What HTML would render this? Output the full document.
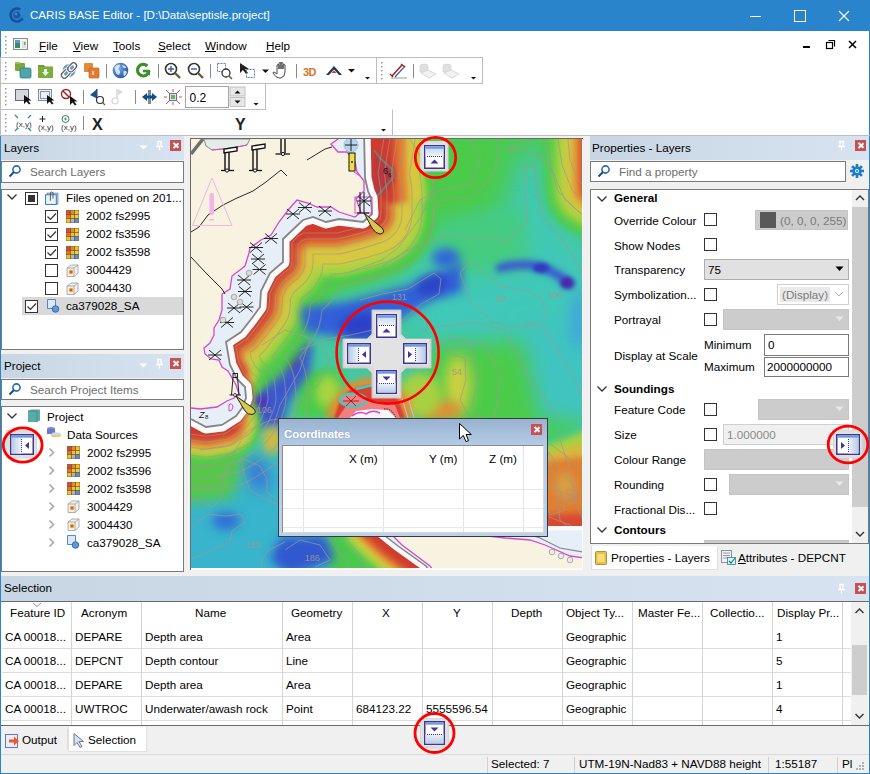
<!DOCTYPE html>
<html><head><meta charset="utf-8">
<style>
*{margin:0;padding:0;box-sizing:border-box}
html,body{width:870px;height:774px;overflow:hidden;background:#f0f0f0;font-family:"Liberation Sans",sans-serif;font-size:11.7px;color:#000}
.a{position:absolute}
.t{position:absolute;white-space:nowrap;line-height:14px}
.b{font-weight:bold}
.g{color:#6d6d6d}
.hdr{position:absolute;height:24px;background:linear-gradient(90deg,#c8d6e4,#d7e3f0)}
.box{position:absolute;background:#fff;border:1px solid #7a7a7a}
.cb{position:absolute;width:13px;height:13px;border:1px solid #333;background:#fff}
.xbtn{position:absolute;width:11px;height:11px;background:#c75050}
.xbtn:before,.xbtn:after{content:"";position:absolute;left:5px;top:2px;width:1.6px;height:7px;background:#fff;transform:rotate(45deg)}
.xbtn:after{transform:rotate(-45deg)}
.combo{position:absolute;background:#e1e1e1;border:1px solid #adadad}
.dis{position:absolute;background:#cccccc;border:1px solid #c4c4c4}
.vl{position:absolute;width:1px;background:#d5d5d5}
.hl{position:absolute;height:1px;background:#dcdcdc}
</style></head><body>

<svg width="0" height="0" style="position:absolute">
<defs>
<symbol id="grid" viewBox="0 0 13 13">
<rect x="0" y="0" width="13" height="13" fill="#8a6a3a"/>
<rect x="0.5" y="0.5" width="4" height="4" fill="#d2483a"/><rect x="4.5" y="0.5" width="4" height="4" fill="#e8882a"/><rect x="8.5" y="0.5" width="4" height="4" fill="#f4c21c"/>
<rect x="0.5" y="4.5" width="4" height="4" fill="#e8702a"/><rect x="4.5" y="4.5" width="4" height="4" fill="#f2c41e"/><rect x="8.5" y="4.5" width="4" height="4" fill="#e8d24a"/>
<rect x="0.5" y="8.5" width="4" height="4" fill="#f4c41e"/><rect x="4.5" y="8.5" width="4" height="4" fill="#a8b8c8"/><rect x="8.5" y="8.5" width="4" height="4" fill="#5a8ed0"/>
<path d="M4.5 0v13M8.5 0v13M0 4.5h13M0 8.5h13" stroke="#6a4a2a" stroke-width="0.6"/>
</symbol>
<symbol id="cube" viewBox="0 0 13 13">
<path d="M1 4l4-3h7v8l-4 3.5H1z" fill="#f2f2f2" stroke="#9a9a9a" stroke-width="0.8"/>
<path d="M1 4h7v8.5M8 4l4-3" fill="none" stroke="#9a9a9a" stroke-width="0.8"/>
<circle cx="5" cy="8" r="2.2" fill="#f0a020"/><circle cx="5" cy="8" r="1" fill="#e04020"/>
</symbol>
<symbol id="clip" viewBox="0 0 13 13">
<rect x="2" y="2" width="10" height="10" fill="#cfe0ef" stroke="#5a8ac0" stroke-width="0.8"/>
<rect x="0.5" y="3.5" width="10" height="9" fill="#e8f0f8" stroke="#3a78b8" stroke-width="0.9"/>
<path d="M5 9V1.5q1.2-1.2 2.4 0V7" fill="none" stroke="#555" stroke-width="0.9"/>
</symbol>
<symbol id="doc" viewBox="0 0 14 14">
<path d="M1.5 0.5h8v9h-8z" fill="#dce8f6" stroke="#4a7ac0" stroke-width="0.9"/>
<circle cx="9.5" cy="10" r="3.3" fill="#5a9ae0" stroke="#2a5aa0" stroke-width="0.8"/>
</symbol>
<symbol id="chk" viewBox="0 0 13 13">
<path d="M2.5 6.5l3 3 5.5-6" fill="none" stroke="#333" stroke-width="1.2"/>
</symbol>
</defs></svg>

<!-- window border -->
<div class="a" style="left:0;top:0;width:870px;height:774px;border:1px solid #2a84cc;border-top:0"></div>
<!-- title bar -->
<div class="a" style="left:0;top:0;width:870px;height:31px;background:#2a84cc"></div>
<svg class="a" style="left:8px;top:6px" width="18" height="18"><circle cx="9" cy="9" r="6.5" fill="none" stroke="#1c4f9a" stroke-width="2.6" stroke-dasharray="30 10" transform="rotate(30 9 9)"/><circle cx="8.8" cy="9" r="3.6" fill="#1858a8"/><circle cx="8" cy="8" r="1.3" fill="#4a8ad8"/></svg>
<div class="t" style="left:30px;top:8px;color:#fff;font-size:11.6px">CARIS BASE Editor - [D:\Data\septisle.project]</div>
<svg class="a" style="left:750px;top:6px" width="115" height="20">
<path d="M0 10.5h11" stroke="#fff" stroke-width="1"/>
<rect x="44.5" y="4.5" width="11" height="11" fill="none" stroke="#fff" stroke-width="1"/>
<path d="M89 5l10 10M99 5l-10 10" stroke="#fff" stroke-width="1.1"/>
</svg>

<!-- menu bar & toolbar bg -->
<div class="a" style="left:1px;top:31px;width:868px;height:104px;background:#fff"></div>
<svg class="a" style="left:12px;top:37px" width="18" height="15"><rect x="1.5" y="1.5" width="14" height="11" fill="#f4f4f4" stroke="#8a8a8a"/><rect x="3" y="4" width="5" height="7" fill="#3a8a6a"/><rect x="3" y="3" width="5" height="3" fill="#5a9ad0"/><rect x="10" y="4" width="4" height="7" fill="#e0e0e0"/><rect x="12" y="5" width="1.5" height="3" fill="#6ab04a"/></svg>
<div class="t" style="left:39px;top:39px"><u>F</u>ile</div>
<div class="t" style="left:73px;top:39px"><u>V</u>iew</div>
<div class="t" style="left:113px;top:39px"><u>T</u>ools</div>
<div class="t" style="left:158px;top:39px"><u>S</u>elect</div>
<div class="t" style="left:205px;top:39px"><u>W</u>indow</div>
<div class="t" style="left:266px;top:39px"><u>H</u>elp</div>
<svg class="a" style="left:800px;top:36px" width="65" height="18">
<rect x="3" y="10" width="7" height="2" fill="#000"/>
<rect x="26.5" y="6.5" width="6" height="6" fill="none" stroke="#000" stroke-width="1.2"/><path d="M28.5 4.5h6v6" fill="none" stroke="#000" stroke-width="1.2"/>
<path d="M49 5l7 7M56 5l-7 7" stroke="#000" stroke-width="1.5"/>
</svg>

<!-- docks background -->
<div class="a" style="left:1px;top:135px;width:868px;height:638px;background:#f0f0f0"></div>

<!-- ============ Layers panel ============ -->
<div class="hdr" style="left:1px;top:136px;width:183px"></div>
<div class="t" style="left:4px;top:141px">Layers</div>
<svg class="a" style="left:138px;top:140px" width="30" height="14"><path d="M1.5 5.5h8l-4 4z" fill="#fff"/><path d="M19 1.5h5M20 1.5v5h3v-5M18 6.5h7M21.5 6.5v4" stroke="#fff" stroke-width="1.3" fill="none"/></svg>
<div class="xbtn" style="left:170px;top:140px"></div>
<div class="box" style="left:1px;top:161px;width:183px;height:22px"></div>
<svg class="a" style="left:8px;top:164px" width="14" height="14"><circle cx="8.5" cy="5.5" r="3.6" fill="none" stroke="#2a6ab0" stroke-width="1.6"/><path d="M6 8l-4.5 4.5" stroke="#1a4a8a" stroke-width="2"/></svg>
<div class="t g" style="left:30px;top:165px">Search Layers</div>
<div class="box" style="left:1px;top:189px;width:183px;height:161px"></div>
<div class="a" style="left:22px;top:297px;width:161px;height:18px;background:#d9d9d9"></div>
<svg class="a" style="left:6px;top:193px" width="12" height="8"><path d="M1.5 1.5l4.5 4.5 4.5-4.5" fill="none" stroke="#333" stroke-width="1.3"/></svg>
<div class="cb" style="left:25px;top:192px"></div><div class="a" style="left:28px;top:195px;width:7px;height:7px;background:#333"></div>
<svg class="a" style="left:45px;top:191px" width="14" height="14"><use href="#clip"/></svg>
<div class="t" style="left:66px;top:191px">Files opened on 201...</div>

<div class="cb" style="left:45px;top:210px"></div><svg class="a" style="left:45px;top:210px" width="13" height="13"><use href="#chk"/></svg>
<svg class="a" style="left:66px;top:210px" width="13" height="13"><use href="#grid"/></svg>
<div class="t" style="left:86px;top:209px">2002 fs2995</div>
<div class="cb" style="left:45px;top:228px"></div><svg class="a" style="left:45px;top:228px" width="13" height="13"><use href="#chk"/></svg>
<svg class="a" style="left:66px;top:228px" width="13" height="13"><use href="#grid"/></svg>
<div class="t" style="left:86px;top:227px">2002 fs3596</div>
<div class="cb" style="left:45px;top:246px"></div><svg class="a" style="left:45px;top:246px" width="13" height="13"><use href="#chk"/></svg>
<svg class="a" style="left:66px;top:246px" width="13" height="13"><use href="#grid"/></svg>
<div class="t" style="left:86px;top:245px">2002 fs3598</div>
<div class="cb" style="left:45px;top:264px"></div>
<svg class="a" style="left:66px;top:264px" width="13" height="13"><use href="#cube"/></svg>
<div class="t" style="left:86px;top:263px">3004429</div>
<div class="cb" style="left:45px;top:282px"></div>
<svg class="a" style="left:66px;top:282px" width="13" height="13"><use href="#cube"/></svg>
<div class="t" style="left:86px;top:281px">3004430</div>
<div class="cb" style="left:25px;top:300px"></div><svg class="a" style="left:25px;top:300px" width="13" height="13"><use href="#chk"/></svg>
<svg class="a" style="left:46px;top:299px" width="14" height="14"><use href="#doc"/></svg>
<div class="t" style="left:66px;top:299px">ca379028_SA</div>

<!-- ============ Project panel ============ -->
<div class="hdr" style="left:1px;top:354px;width:183px"></div>
<div class="t" style="left:4px;top:359px">Project</div>
<svg class="a" style="left:138px;top:358px" width="30" height="14"><path d="M1.5 5.5h8l-4 4z" fill="#fff"/><path d="M19 1.5h5M20 1.5v5h3v-5M18 6.5h7M21.5 6.5v4" stroke="#fff" stroke-width="1.3" fill="none"/></svg>
<div class="xbtn" style="left:170px;top:358px"></div>
<div class="box" style="left:1px;top:379px;width:183px;height:21px"></div>
<svg class="a" style="left:8px;top:382px" width="14" height="14"><circle cx="8.5" cy="5.5" r="3.6" fill="none" stroke="#2a6ab0" stroke-width="1.6"/><path d="M6 8l-4.5 4.5" stroke="#1a4a8a" stroke-width="2"/></svg>
<div class="t g" style="left:30px;top:383px">Search Project Items</div>
<div class="box" style="left:1px;top:406px;width:183px;height:166px"></div>
<svg class="a" style="left:6px;top:412px" width="12" height="8"><path d="M1.5 1.5l4.5 4.5 4.5-4.5" fill="none" stroke="#333" stroke-width="1.3"/></svg>
<svg class="a" style="left:26px;top:409px" width="16" height="15"><path d="M2 2l3-1.5h9v11l-3 1.5H2z" fill="#5aaaa8"/><path d="M2 2h9v11" fill="none" stroke="#3a8a88" stroke-width="0.8"/></svg>
<div class="t" style="left:47px;top:410px">Project</div>
<svg class="a" style="left:46px;top:426px" width="16" height="14"><ellipse cx="5" cy="3" rx="4" ry="2" fill="#7a8ad0"/><rect x="1" y="3" width="8" height="5" fill="#6a7ac8"/><ellipse cx="10" cy="9" rx="5" ry="2.2" fill="#f0c830"/><ellipse cx="10" cy="8" rx="4.5" ry="1.8" fill="#c8d8f0"/></svg>
<div class="t" style="left:67px;top:428px">Data Sources</div>
<svg class="a" style="left:47px;top:447px" width="10" height="108"><path d="M2.5 1.5l4 4-4 4M2.5 19.5l4 4-4 4M2.5 37.5l4 4-4 4M2.5 55.5l4 4-4 4M2.5 73.5l4 4-4 4M2.5 91.5l4 4-4 4" fill="none" stroke="#a8a8a8" stroke-width="1.6"/></svg>
<svg class="a" style="left:67px;top:446px" width="13" height="13"><use href="#grid"/></svg>
<div class="t" style="left:87px;top:446px">2002 fs2995</div>
<svg class="a" style="left:67px;top:464px" width="13" height="13"><use href="#grid"/></svg>
<div class="t" style="left:87px;top:464px">2002 fs3596</div>
<svg class="a" style="left:67px;top:482px" width="13" height="13"><use href="#grid"/></svg>
<div class="t" style="left:87px;top:482px">2002 fs3598</div>
<svg class="a" style="left:67px;top:500px" width="13" height="13"><use href="#cube"/></svg>
<div class="t" style="left:87px;top:500px">3004429</div>
<svg class="a" style="left:67px;top:518px" width="13" height="13"><use href="#cube"/></svg>
<div class="t" style="left:87px;top:518px">3004430</div>
<svg class="a" style="left:66px;top:535px" width="14" height="14"><use href="#doc"/></svg>
<div class="t" style="left:87px;top:536px">ca379028_SA</div>

<!-- map frame -->
<div class="a" style="left:190px;top:138px;width:393px;height:432px;background:#fbfbfb;border-left:1px solid #6a6a6a;border-top:1px solid #6a6a6a"></div>

<!-- ============ Properties panel ============ -->
<div class="hdr" style="left:590px;top:136px;width:279px"></div>
<div class="t" style="left:592px;top:141px">Properties - Layers</div>
<svg class="a" style="left:836px;top:140px" width="14" height="14"><path d="M3 1.5h5M4 1.5v5h3v-5M2 6.5h7M5.5 6.5v4" stroke="#fff" stroke-width="1.3" fill="none"/></svg>
<div class="xbtn" style="left:855px;top:140px"></div>
<div class="box" style="left:590px;top:161px;width:256px;height:21px"></div>
<svg class="a" style="left:597px;top:164px" width="14" height="14"><circle cx="8.5" cy="5.5" r="3.6" fill="none" stroke="#2a6ab0" stroke-width="1.6"/><path d="M6 8l-4.5 4.5" stroke="#1a4a8a" stroke-width="2"/></svg>
<div class="t g" style="left:619px;top:165px">Find a property</div>
<svg class="a" style="left:849px;top:163px" width="16" height="16"><g transform="translate(8 8)" fill="#1a7ad0"><circle r="4.6"/><rect x="-1.3" y="-7" width="2.6" height="14"/><rect x="-7" y="-1.3" width="14" height="2.6"/><rect x="-1.3" y="-7" width="2.6" height="14" transform="rotate(45)"/><rect x="-1.3" y="-7" width="2.6" height="14" transform="rotate(-45)"/><circle r="2" fill="#fff"/><circle r="1.1" fill="#1a7ad0"/></g></svg>
<div class="box" style="left:590px;top:189px;width:279px;height:355px"></div>
<!-- prop scrollbar -->
<div class="a" style="left:852px;top:190px;width:16px;height:353px;background:#f0f0f0"></div>
<div class="a" style="left:852px;top:207px;width:16px;height:300px;background:#cdcdcd"></div>
<svg class="a" style="left:852px;top:190px" width="16" height="353"><path d="M4 10l4-4 4 4" fill="none" stroke="#333" stroke-width="1.4"/><path d="M4 342l4 4 4-4" fill="none" stroke="#333" stroke-width="1.4"/></svg>

<svg class="a" style="left:596px;top:195px" width="12" height="8"><path d="M1.5 1.5l4.5 4.5 4.5-4.5" fill="none" stroke="#333" stroke-width="1.3"/></svg>
<div class="t b" style="left:614px;top:191px">General</div>
<div class="t" style="left:614px;top:213.5px">Override Colour</div>
<div class="cb" style="left:704px;top:213px"></div>
<div class="dis" style="left:755px;top:210px;width:93px;height:20px"></div>
<div class="a" style="left:760px;top:212px;width:16px;height:16px;background:#595959"></div>
<div class="t" style="left:780px;top:213.5px;color:#7a7a7a">(0, 0, 0, 255)</div>
<div class="t" style="left:614px;top:239px">Show Nodes</div>
<div class="cb" style="left:704px;top:238px"></div>
<div class="t" style="left:614px;top:262.5px">Transparency</div>
<div class="combo" style="left:704px;top:259px;width:145px;height:21px"></div>
<div class="t" style="left:708px;top:262.5px">75</div>
<svg class="a" style="left:835px;top:266px" width="10" height="6"><path d="M0.5 0.5h8l-4 4.5z" fill="#000"/></svg>
<div class="t" style="left:614px;top:287.5px">Symbolization...</div>
<div class="cb" style="left:704px;top:288px"></div>
<div class="a" style="left:777px;top:284px;width:72px;height:21px;background:#fff;border:1px solid #d0d0d0"></div>
<div class="a" style="left:780px;top:287px;width:50px;height:15px;background:#e8e8e8"></div>
<div class="t" style="left:782px;top:287.5px;color:#7a7a7a">(Display)</div>
<svg class="a" style="left:834px;top:291px" width="10" height="7"><path d="M1 1l4 4 4-4" fill="none" stroke="#b0b0b0" stroke-width="1"/></svg>
<div class="t" style="left:614px;top:312.5px">Portrayal</div>
<div class="cb" style="left:704px;top:313px"></div>
<div class="dis" style="left:723px;top:309px;width:126px;height:21px"></div>
<svg class="a" style="left:835px;top:316px" width="10" height="7"><path d="M0.5 0.5h8l-4 4.5z" fill="#e8e8e8"/></svg>
<div class="t" style="left:614px;top:349px">Display at Scale</div>
<div class="t" style="left:704px;top:338px">Minimum</div>
<div class="a" style="left:764px;top:334px;width:85px;height:22px;background:#fff;border:1px solid #7a7a7a"></div>
<div class="t" style="left:768px;top:338px">0</div>
<div class="t" style="left:704px;top:360px">Maximum</div>
<div class="a" style="left:764px;top:357px;width:85px;height:20px;background:#fff;border:1px solid #7a7a7a"></div>
<div class="t" style="left:767px;top:360px">2000000000</div>
<svg class="a" style="left:596px;top:385px" width="12" height="8"><path d="M1.5 1.5l4.5 4.5 4.5-4.5" fill="none" stroke="#333" stroke-width="1.3"/></svg>
<div class="t b" style="left:614px;top:382px">Soundings</div>
<div class="t" style="left:614px;top:403px">Feature Code</div>
<div class="cb" style="left:704px;top:403px"></div>
<div class="dis" style="left:758px;top:399px;width:91px;height:21px"></div>
<svg class="a" style="left:835px;top:406px" width="10" height="7"><path d="M0.5 0.5h8l-4 4.5z" fill="#e8e8e8"/></svg>
<div class="t" style="left:614px;top:428px">Size</div>
<div class="cb" style="left:704px;top:428px"></div>
<div class="a" style="left:723px;top:424px;width:126px;height:21px;background:#f0f0f0;border:1px solid #cfcfcf"></div>
<div class="t" style="left:727px;top:428px;color:#8a8a8a">1.000000</div>
<div class="t" style="left:614px;top:453px">Colour Range</div>
<div class="dis" style="left:704px;top:449px;width:145px;height:21px"></div>
<div class="t" style="left:614px;top:478px">Rounding</div>
<div class="cb" style="left:704px;top:478px"></div>
<div class="dis" style="left:729px;top:474px;width:120px;height:21px"></div>
<svg class="a" style="left:835px;top:481px" width="10" height="7"><path d="M0.5 0.5h8l-4 4.5z" fill="#e8e8e8"/></svg>
<div class="t" style="left:614px;top:503px">Fractional Dis...</div>
<div class="cb" style="left:704px;top:502px"></div>
<svg class="a" style="left:596px;top:526px" width="12" height="8"><path d="M1.5 1.5l4.5 4.5 4.5-4.5" fill="none" stroke="#333" stroke-width="1.3"/></svg>
<div class="t b" style="left:614px;top:523px">Contours</div>
<div class="a" style="left:704px;top:540px;width:145px;height:3px;background:#cccccc;border-top:1px solid #c0c0c0"></div>
<!-- prop tabs -->
<div class="a" style="left:591px;top:546px;width:127px;height:24px;background:#fff;border:1px solid #e0e0e0;border-top:0"></div>
<svg class="a" style="left:594px;top:550px" width="14" height="16"><rect x="1.5" y="1.5" width="11" height="13" rx="1" fill="#f0c030" stroke="#8a7a50" stroke-width="0.8"/><rect x="3.5" y="4" width="7" height="8" fill="#f8e080"/></svg>
<div class="t" style="left:611px;top:551px">Properties - Layers</div>
<svg class="a" style="left:720px;top:549px" width="18" height="17"><rect x="1.5" y="1.5" width="10" height="12" fill="#f0f0f0" stroke="#7a7a7a" stroke-width="0.8"/><path d="M3 4h7M3 6.5h7M3 9h5" stroke="#7a8aa0" stroke-width="0.8"/><rect x="7.5" y="8.5" width="8" height="7" fill="#e0f0f8" stroke="#3a78b8" stroke-width="0.8"/><path d="M9 12l2 2 4-5" fill="none" stroke="#1a8a4a" stroke-width="1.2"/></svg>
<div class="t" style="left:738px;top:551px"><u>A</u>ttributes - DEPCNT</div>

<!-- ============ Selection panel ============ -->
<div class="hdr" style="left:1px;top:576px;width:868px;height:25px"></div>
<div class="t" style="left:4px;top:581px">Selection</div>
<svg class="a" style="left:836px;top:583px" width="14" height="14"><path d="M3 1.5h5M4 1.5v5h3v-5M2 6.5h7M5.5 6.5v4" stroke="#fff" stroke-width="1.3" fill="none"/></svg>
<div class="xbtn" style="left:855px;top:583px"></div>
<div class="a" style="left:1px;top:601px;width:868px;height:125px;background:#fff;border-top:1px solid #6a6a6a;border-bottom:1px solid #6a6a6a"></div>
<!-- grid lines -->
<div class="hl" style="left:2px;top:648px;width:849px"></div>
<div class="hl" style="left:2px;top:672px;width:849px"></div>
<div class="hl" style="left:2px;top:696px;width:849px"></div>
<div class="hl" style="left:2px;top:720px;width:849px"></div>
<div class="vl" style="left:71px;top:602px;height:123px"></div>
<div class="vl" style="left:141px;top:602px;height:123px"></div>
<div class="vl" style="left:282px;top:602px;height:123px"></div>
<div class="vl" style="left:352px;top:602px;height:123px"></div>
<div class="vl" style="left:422px;top:602px;height:123px"></div>
<div class="vl" style="left:492px;top:602px;height:123px"></div>
<div class="vl" style="left:562px;top:602px;height:123px"></div>
<div class="vl" style="left:632px;top:602px;height:123px"></div>
<div class="vl" style="left:702px;top:602px;height:123px"></div>
<div class="vl" style="left:772px;top:602px;height:123px"></div>
<div class="vl" style="left:842px;top:602px;height:123px"></div>
<svg class="a" style="left:32px;top:602px" width="10" height="6"><path d="M1 1l4 3.5 4-3.5" fill="none" stroke="#8a8a8a" stroke-width="0.9"/></svg>
<div class="t" style="left:10px;top:606px">Feature ID</div>
<div class="t" style="left:81px;top:606px">Acronym</div>
<div class="t" style="left:195px;top:606px">Name</div>
<div class="t" style="left:291px;top:606px">Geometry</div>
<div class="t" style="left:382px;top:606px">X</div>
<div class="t" style="left:453px;top:606px">Y</div>
<div class="t" style="left:511px;top:606px">Depth</div>
<div class="t" style="left:566px;top:606px">Object Ty...</div>
<div class="t" style="left:638px;top:606px">Master Fe...</div>
<div class="t" style="left:710px;top:606px">Collectio...</div>
<div class="t" style="left:777px;top:606px">Display Pr...</div>

<div class="t" style="left:5px;top:630px">CA 00018...</div><div class="t" style="left:75px;top:630px">DEPARE</div><div class="t" style="left:145px;top:630px">Depth area</div><div class="t" style="left:286px;top:630px">Area</div><div class="t" style="left:566px;top:630px">Geographic</div><div class="t" style="left:776px;top:630px">1</div>
<div class="t" style="left:5px;top:654px">CA 00018...</div><div class="t" style="left:75px;top:654px">DEPCNT</div><div class="t" style="left:145px;top:654px">Depth contour</div><div class="t" style="left:286px;top:654px">Line</div><div class="t" style="left:566px;top:654px">Geographic</div><div class="t" style="left:776px;top:654px">5</div>
<div class="t" style="left:5px;top:678px">CA 00018...</div><div class="t" style="left:75px;top:678px">DEPARE</div><div class="t" style="left:145px;top:678px">Depth area</div><div class="t" style="left:286px;top:678px">Area</div><div class="t" style="left:566px;top:678px">Geographic</div><div class="t" style="left:776px;top:678px">1</div>
<div class="t" style="left:5px;top:702px">CA 00018...</div><div class="t" style="left:75px;top:702px">UWTROC</div><div class="t" style="left:145px;top:702px">Underwater/awash rock</div><div class="t" style="left:286px;top:702px">Point</div><div class="t" style="left:356px;top:702px">684123.22</div><div class="t" style="left:426px;top:702px">5555596.54</div><div class="t" style="left:566px;top:702px">Geographic</div><div class="t" style="left:776px;top:702px">4</div>
<!-- table scrollbar -->
<div class="a" style="left:851px;top:602px;width:17px;height:123px;background:#f0f0f0"></div>
<div class="a" style="left:852px;top:645px;width:15px;height:50px;background:#cdcdcd"></div>
<svg class="a" style="left:851px;top:602px" width="17" height="123"><path d="M4.5 11l4-4 4 4" fill="none" stroke="#333" stroke-width="1.4"/><path d="M4.5 112l4 4 4-4" fill="none" stroke="#333" stroke-width="1.4"/></svg>

<!-- bottom tabs -->
<div class="a" style="left:1px;top:754px;width:868px;height:1px;background:#dadada"></div>
<div class="a" style="left:1px;top:729px;width:67px;height:20px;background:#f0f0f0;border-right:1px solid #dcdcdc"></div>
<div class="a" style="left:68px;top:727px;width:79px;height:25px;background:#fff;border:1px solid #e0e0e0;border-top:0"></div>
<svg class="a" style="left:4px;top:733px" width="17" height="16"><rect x="1.5" y="1.5" width="12" height="13" fill="#e8eef8" stroke="#5a6aa8" stroke-width="0.9"/><path d="M5 6.5h5v-3l5 4.5-5 4.5v-3H5z" fill="#f05a2a"/></svg>
<div class="t" style="left:22px;top:733px">Output</div>
<svg class="a" style="left:72px;top:732px" width="14" height="17"><path d="M2 1.5v12l3-3 3 5 2-1-3-5h4.5z" fill="#d8e4f2" stroke="#5a6a8a" stroke-width="0.9"/></svg>
<div class="t" style="left:88px;top:733px">Selection</div>

<!-- status bar -->
<div class="a" style="left:487px;top:757px;width:1px;height:16px;background:#d0d0d0"></div>
<div class="a" style="left:574px;top:757px;width:1px;height:16px;background:#d0d0d0"></div>
<div class="a" style="left:768px;top:757px;width:1px;height:16px;background:#d0d0d0"></div>
<div class="a" style="left:837px;top:757px;width:1px;height:16px;background:#d0d0d0"></div>
<div class="t" style="left:491px;top:757px">Selected: 7</div>
<div class="t" style="left:579px;top:757px">UTM-19N-Nad83 + NAVD88 height</div>
<div class="t" style="left:775px;top:757px">1:55187</div>
<div class="t" style="left:842px;top:757px">Pl</div>
<svg class="a" style="left:854px;top:760px" width="12" height="12"><g fill="#b0b0b0"><rect x="8" y="2" width="2" height="2"/><rect x="5" y="5" width="2" height="2"/><rect x="8" y="5" width="2" height="2"/><rect x="2" y="8" width="2" height="2"/><rect x="5" y="8" width="2" height="2"/><rect x="8" y="8" width="2" height="2"/></g></svg>

<svg class="a" style="left:0;top:0" width="870" height="136"><rect x="0.5" y="57.5" width="376" height="26" fill="none" stroke="#bdbdbd"/><rect x="376.5" y="57.5" width="106" height="26" fill="none" stroke="#bdbdbd"/><rect x="0.5" y="83.5" width="265" height="26" fill="none" stroke="#bdbdbd"/><path d="M0.5 109.5V135M392.5 135V109.5" fill="none" stroke="#bdbdbd"/><line x1="0" y1="135.5" x2="870" y2="135.5" stroke="#bdbdbd"/><rect x="5" y="62" width="1.5" height="1.5" fill="#9a9a9a"/><rect x="5" y="66" width="1.5" height="1.5" fill="#9a9a9a"/><rect x="5" y="70" width="1.5" height="1.5" fill="#9a9a9a"/><rect x="5" y="74" width="1.5" height="1.5" fill="#9a9a9a"/><rect x="5" y="78" width="1.5" height="1.5" fill="#9a9a9a"/><rect x="5" y="88" width="1.5" height="1.5" fill="#9a9a9a"/><rect x="5" y="92" width="1.5" height="1.5" fill="#9a9a9a"/><rect x="5" y="96" width="1.5" height="1.5" fill="#9a9a9a"/><rect x="5" y="100" width="1.5" height="1.5" fill="#9a9a9a"/><rect x="5" y="104" width="1.5" height="1.5" fill="#9a9a9a"/><rect x="5" y="114" width="1.5" height="1.5" fill="#9a9a9a"/><rect x="5" y="118" width="1.5" height="1.5" fill="#9a9a9a"/><rect x="5" y="122" width="1.5" height="1.5" fill="#9a9a9a"/><rect x="5" y="126" width="1.5" height="1.5" fill="#9a9a9a"/><rect x="5" y="130" width="1.5" height="1.5" fill="#9a9a9a"/><rect x="381" y="62" width="1.5" height="1.5" fill="#9a9a9a"/><rect x="381" y="66" width="1.5" height="1.5" fill="#9a9a9a"/><rect x="381" y="70" width="1.5" height="1.5" fill="#9a9a9a"/><rect x="381" y="74" width="1.5" height="1.5" fill="#9a9a9a"/><rect x="381" y="78" width="1.5" height="1.5" fill="#9a9a9a"/><rect x="5" y="36" width="1.5" height="1.5" fill="#9a9a9a"/><rect x="5" y="40" width="1.5" height="1.5" fill="#9a9a9a"/><rect x="5" y="44" width="1.5" height="1.5" fill="#9a9a9a"/><rect x="5" y="48" width="1.5" height="1.5" fill="#9a9a9a"/><rect x="5" y="52" width="1.5" height="1.5" fill="#9a9a9a"/><rect x="106.0" y="64" width="1" height="14" fill="#8a8a8a"/><rect x="158.0" y="64" width="1" height="14" fill="#8a8a8a"/><rect x="210.0" y="64" width="1" height="14" fill="#8a8a8a"/><rect x="296.0" y="64" width="1" height="14" fill="#8a8a8a"/><rect x="413.0" y="64" width="1" height="14" fill="#8a8a8a"/><rect x="83.0" y="90" width="1" height="14" fill="#8a8a8a"/><rect x="135.0" y="90" width="1" height="14" fill="#8a8a8a"/><rect x="83.0" y="116" width="1" height="14" fill="#8a8a8a"/><rect x="15" y="63" width="10" height="8" rx="1" fill="#7aa83a"/><rect x="15" y="62" width="5" height="2" fill="#9cc45a"/><rect x="20" y="68" width="11" height="10" rx="1.5" fill="#4fa5a8" stroke="#2e7f85" stroke-width="0.8"/><path d="M38 65h6l1 1.5h8v11.5h-15z" fill="#6f9e35"/><rect x="38" y="67" width="15" height="11" fill="#7cab3e"/><path d="M44 69h3v3h2l-3.5 4-3.5-4h2z" fill="#eaf3dc"/><circle cx="69" cy="70.5" r="6.5" fill="#5a88c0" opacity="0.85"/><g transform="rotate(-45 69 70.5)"><rect x="59.5" y="67.5" width="10" height="6" rx="3" fill="none" stroke="#fff" stroke-width="3"/><rect x="59.5" y="67.5" width="10" height="6" rx="3" fill="none" stroke="#5a5a5a" stroke-width="1.2"/><rect x="68.5" y="67.5" width="10" height="6" rx="3" fill="none" stroke="#fff" stroke-width="3"/><rect x="68.5" y="67.5" width="10" height="6" rx="3" fill="none" stroke="#5a5a5a" stroke-width="1.2"/></g><rect x="84" y="63" width="9" height="9" rx="1" fill="#e08a3a"/><rect x="89" y="68" width="10" height="10" rx="1" fill="#e57b2c" stroke="#c0602a" stroke-width="0.7"/><path d="M93 71v4" stroke="#fff" stroke-width="1.2"/><defs><radialGradient id="glb" cx="0.35" cy="0.35" r="0.7"><stop offset="0" stop-color="#8ab4e6"/><stop offset="0.6" stop-color="#3f78c0"/><stop offset="1" stop-color="#2a5a9a"/></radialGradient></defs><circle cx="120.5" cy="70.5" r="7.8" fill="url(#glb)"/><path d="M114.5 67 q2 -3 5 -2.5 q1.5 1.5 -0.5 3 q-1 2 1 3.5 q1 2 -1.5 4 q-2.5 -1 -3 -3.5 q-1 -2 -1 -4.5z M122 65 q3 0 4.5 2.5 q-1 1 -2.5 0.5 q-1.5 -1 -2 -3z M123.5 71 q2 -1 3.5 1 q-1 3 -3 4.5 q-1 -2 -0.5 -5.5z" fill="#dfe9f5" opacity="0.9"/><path d="M149 71 A5.8 5.8 0 1 1 147.3 66" fill="none" stroke="#3c8f2c" stroke-width="3.2"/><path d="M144 70h6v6z" fill="#3c8f2c"/><path d="M143 71h6.5" stroke="#3c8f2c" stroke-width="2.6"/><circle cx="171" cy="69" r="5.5" fill="#fff" stroke="#333" stroke-width="1.6"/><path d="M175 73l5 5" stroke="#6b5a3a" stroke-width="2.4"/><path d="M168 69h6M171 66v6" stroke="#2d5fa6" stroke-width="1.4"/><circle cx="194" cy="69" r="5.5" fill="#fff" stroke="#333" stroke-width="1.6"/><path d="M198 73l5 5" stroke="#6b5a3a" stroke-width="2.4"/><path d="M191 69h6" stroke="#2d5fa6" stroke-width="1.4"/><rect x="217.5" y="63.5" width="8" height="8" fill="none" stroke="#5a7db0" stroke-dasharray="2 1"/><circle cx="226" cy="73" r="4" fill="#fff" stroke="#333" stroke-width="1.3"/><path d="M229 76l3 3" stroke="#6b5a3a" stroke-width="1.6"/><path d="M240 63l0 10 3-3 3 4 2-1-3-4h4z" fill="#222"/><rect x="246.5" y="69.5" width="8" height="8" fill="none" stroke="#5a7db0" stroke-dasharray="2 1"/><path d="M262 69.5h7l-3.5 3.5z" fill="#111"/><path d="M277 70v-5q1-1 2 0v4v-6q1-1 2 0v6v-6q1-1 2 0v6v-4q1-1 2 0v7q0 5-4 6h-2q-3 0-6-5q0-1 1-1l3 2z" fill="#fff" stroke="#333" stroke-width="0.9"/><text x="303" y="75.5" font-family="Liberation Sans" font-weight="bold" font-size="11" fill="#d9731f" letter-spacing="-0.5">3D</text><path d="M326 75l8-9 8 9h-3l-5-5.5-5 5.5z" fill="#1f3a4f"/><path d="M331.5 73l2.5-2.5 2.5 2.5z" fill="#e0302a"/><path d="M348 69h7l-3.5 3.5z" fill="#111"/><path d="M365 77h5l-2.5 2.5z" fill="#111"/><path d="M471 77h5l-2.5 2.5z" fill="#111"/><path d="M392 76l10-11" stroke="#a01e1e" stroke-width="1.5"/><path d="M395 77l10-11" stroke="#3a5fa0" stroke-width="1.2"/><path d="M391 78h16" stroke="#999" stroke-width="1"/><path d="M401 64l4 3M390 74l3 3" stroke="#a01e1e" stroke-width="1.3"/><path d="M420 66q0-2 4-2t4 2v6h-8z" fill="#e0e0e0" stroke="#cfcfcf" stroke-width="0.6"/><path d="M421 73l7-3 8 4-7 4z" fill="#f2f2f2" stroke="#cfcfcf" stroke-width="0.8"/><path d="M443 66q0-2 4-2t4 2v6h-8z" fill="#e0e0e0" stroke="#cfcfcf" stroke-width="0.6"/><path d="M444 73l7-3 8 4-7 4z" fill="#f2f2f2" stroke="#cfcfcf" stroke-width="0.8"/><rect x="15.5" y="89.5" width="13" height="11" fill="#d8d8d8" stroke="#4a6aa8"/><path d="M24 95l0 9 2.5-2.5 2.5 3 1.5-1-2.5-3h3.5z" fill="#111"/><rect x="38.5" y="89.5" width="13" height="11" fill="#f0f0f0" stroke="#8a8a8a"/><rect x="40.5" y="91.5" width="9" height="7" fill="none" stroke="#6a9ad8"/><path d="M47 95l0 9 2.5-2.5 2.5 3 1.5-1-2.5-3h3.5z" fill="#111"/><circle cx="66" cy="94" r="4.5" fill="none" stroke="#a02020" stroke-width="1.4"/><path d="M63 91l6 6" stroke="#a02020" stroke-width="1.4"/><path d="M70 96l0 9 2.5-2.5 2.5 3 1.5-1-2.5-3h3.5z" fill="#111"/><path d="M90 95l6-5v8z" fill="#1d4f8f"/><rect x="96" y="89" width="1.5" height="9" fill="#1d4f8f"/><circle cx="100" cy="100" r="3.5" fill="#fff" stroke="#333" stroke-width="1.2"/><path d="M102.5 102.5l2.5 2.5" stroke="#6b5a3a" stroke-width="1.3"/><path d="M117 89v9" stroke="#d0d0d0" stroke-width="1.3"/><path d="M118 89l5 3-5 3z" fill="#dadada"/><circle cx="115" cy="101" r="3" fill="none" stroke="#d8d8d8" stroke-width="1.2"/><rect x="148" y="90" width="3" height="14" fill="#7f8a95"/><path d="M142 97l5-4v8zM157 97l-5-4v8z" fill="#0f4c8a"/><rect x="146" y="95.5" width="7" height="3" fill="#0f4c8a"/><path d="M166 90l4 4M180 90l-4 4M166 104l4-4M180 104l-4-4M173 89v3M173 102v3M164 97h3M179 97h3" stroke="#e0502a" stroke-width="1"/><rect x="169.5" y="93.5" width="7" height="7" fill="#dce6f2" stroke="#5a6ad0"/><rect x="171" y="95" width="4" height="4" fill="#7ab040"/><text x="16" y="127" font-family="Liberation Sans" font-size="8" fill="#333">(x,y)</text><path d="M15 115l3 3M31 115l-3 3M15 131l3-3M31 131l-3-3" stroke="#2a8a9a" stroke-width="1.2"/><path d="M42.5 116v6M39.5 119h6" stroke="#222" stroke-width="1"/><text x="38" y="130" font-family="Liberation Sans" font-size="8" fill="#333">(x,y)</text><circle cx="65.5" cy="119" r="3.5" fill="none" stroke="#2a8a6a" stroke-width="1"/><path d="M65.5 117.5v3M64 119h3" stroke="#2a8a6a" stroke-width="0.8"/><text x="61" y="130" font-family="Liberation Sans" font-size="8" fill="#333">(x,y)</text><text x="92" y="129.5" font-family="Liberation Sans" font-weight="bold" font-size="16" fill="#222">X</text><text x="235" y="129.5" font-family="Liberation Sans" font-weight="bold" font-size="16" fill="#222">Y</text><path d="M381 129h5l-2.5 2.5z" fill="#111"/><rect x="185.5" y="86.5" width="43" height="21" fill="#fff" stroke="#a5a5a5"/><rect x="230" y="87" width="15" height="9" fill="#e6e6e6" stroke="#c2c2c2" stroke-width="1"/><rect x="230" y="97.5" width="15" height="9" fill="#e6e6e6" stroke="#c2c2c2" stroke-width="1"/><path d="M234.5 93.5h6l-3-3z M234.5 100.5h6l-3 3z" fill="#111"/><text x="189.5" y="102" font-family="Liberation Sans" font-size="12" fill="#000">0.2</text><path d="M253.5 103h5l-2.5 2.5z" fill="#111"/></svg>
<svg class="a" style="left:191px;top:139px" width="391" height="429">
<defs>
<filter id="b14" filterUnits="userSpaceOnUse" x="100" y="80" width="600" height="600"><feGaussianBlur stdDeviation="14"/></filter>
<filter id="b10" filterUnits="userSpaceOnUse" x="100" y="80" width="600" height="600"><feGaussianBlur stdDeviation="10"/></filter>
<filter id="b7" filterUnits="userSpaceOnUse" x="100" y="80" width="600" height="600"><feGaussianBlur stdDeviation="7"/></filter>
<filter id="b5" filterUnits="userSpaceOnUse" x="100" y="80" width="600" height="600"><feGaussianBlur stdDeviation="5"/></filter>
<filter id="b3" filterUnits="userSpaceOnUse" x="100" y="80" width="600" height="600"><feGaussianBlur stdDeviation="3"/></filter>
<filter id="b2" filterUnits="userSpaceOnUse" x="100" y="80" width="600" height="600"><feGaussianBlur stdDeviation="2"/></filter>
<filter id="b1" filterUnits="userSpaceOnUse" x="100" y="80" width="600" height="600"><feGaussianBlur stdDeviation="1.2"/></filter>
</defs>
<g transform="translate(-191,-139)">
<rect x="150" y="100" width="480" height="520" fill="#44c8a0"/>
<path d="M380 120 L570 120 L555 200 L520 215 L470 225 L430 235 L400 250 L360 280 L300 300 L260 330 L240 300 L300 200z" fill="#4ccb48" filter="url(#b14)" opacity="1"/>
<path d="M520 150 L545 150 L560 240 L600 260 L600 345 L420 345 L410 300 L440 250 L500 230z" fill="#40c8b8" filter="url(#b14)" opacity="1"/>
<path d="M430 225 L525 205 L530 265 L450 280z" fill="#44cc80" filter="url(#b10)" opacity="1"/>
<path d="M430 345 L560 340 L585 420 L560 440 L420 440z" fill="#4ccb48" filter="url(#b10)" opacity="1"/>
<path d="M520 320 L600 320 L600 420 L540 420z" fill="#40c4c0" filter="url(#b10)" opacity="1"/>
<path d="M170 470 L300 450 L340 480 L340 600 L170 600z" fill="#38b4cc" filter="url(#b10)" opacity="1"/>
<path d="M170 440 L240 430 L245 460 L232 498 L170 505z" fill="#54c848" filter="url(#b7)" opacity="1"/>
<path d="M325 530 L380 530 L385 600 L330 600z" fill="#4cc850" filter="url(#b5)" opacity="1"/>
<ellipse cx="446" cy="258" rx="14" ry="10" fill="#3068d8" filter="url(#b5)" opacity="1" transform="rotate(0 446 258)"/>
<path d="M500 268 Q522 262 541 267 Q556 272 570 284" fill="none" stroke="#3a58d0" stroke-width="9" stroke-linecap="round" filter="url(#b3)"/>
<ellipse cx="541" cy="268" rx="8" ry="5" fill="#3038c0" filter="url(#b2)" opacity="1" transform="rotate(0 541 268)"/>
<ellipse cx="567" cy="283" rx="7" ry="6" fill="#4a28a8" filter="url(#b2)" opacity="1" transform="rotate(0 567 283)"/>
<ellipse cx="578" cy="320" rx="7" ry="30" fill="#40a0e0" filter="url(#b7)" opacity="1" transform="rotate(0 578 320)"/>
<path d="M300 372 L340 369 L345 418 L295 418z" fill="#4ccb48" filter="url(#b5)" opacity="1"/>
<ellipse cx="328" cy="392" rx="12" ry="16" fill="#a8d440" filter="url(#b5)" opacity="1" transform="rotate(0 328 392)"/>
<path d="M250 428 L248 395 L262 372 L280 345 L300 337 L313 345 L310 372 L290 400 L282 428z" fill="#3a58d0" filter="url(#b5)" opacity="1"/>
<ellipse cx="292" cy="358" rx="6" ry="12" fill="#5030a8" filter="url(#b3)" opacity="1" transform="rotate(0 292 358)"/>
<ellipse cx="260" cy="402" rx="8" ry="11" fill="#4a38c0" filter="url(#b3)" opacity="1" transform="rotate(0 260 402)"/>
<ellipse cx="258" cy="474" rx="10" ry="18" fill="#3a78d8" filter="url(#b7)" opacity="1" transform="rotate(-20 258 474)"/>
<ellipse cx="226" cy="521" rx="14" ry="9" fill="#3070d8" filter="url(#b5)" opacity="1" transform="rotate(0 226 521)"/>
<path d="M280 538 L325 536 L335 560 L290 575 L270 560z" fill="#3058d0" filter="url(#b5)" opacity="1"/>
<path d="M369 125 L370 178 L372 205" fill="none" stroke="#4ccb48" stroke-width="124" stroke-linejoin="round" stroke-linecap="butt" filter="url(#b3)"/>
<path d="M372 214 L356 219 L336 224 L302 224 L292 229" fill="none" stroke="#4ccb48" stroke-width="130" stroke-linejoin="round" stroke-linecap="round" filter="url(#b3)"/>
<path d="M292 229 L283 239 L283 262 L270 273 L261 291 L260 307 L252 318 L241 332 L226 342" fill="none" stroke="#4ccb48" stroke-width="118" stroke-linejoin="round" stroke-linecap="round" filter="url(#b5)"/>
<path d="M222 342 L230 365 L235 373" fill="none" stroke="#4ccb48" stroke-width="60" stroke-linejoin="round" stroke-linecap="round" filter="url(#b3)"/>
<path d="M226 423 L206 427 L180 423" fill="none" stroke="#4ccb48" stroke-width="70" stroke-linejoin="round" stroke-linecap="round" filter="url(#b3)"/>
<path d="M590 125 L590 190 L640 215" fill="none" stroke="#4ccb48" stroke-width="90" stroke-linejoin="round" stroke-linecap="round" filter="url(#b5)"/>
<path d="M369 125 L370 178 L372 205" fill="none" stroke="#a8d440" stroke-width="110" stroke-linejoin="round" stroke-linecap="butt" filter="url(#b3)"/>
<path d="M372 214 L356 219 L336 224 L302 224 L292 229" fill="none" stroke="#a8d440" stroke-width="104" stroke-linejoin="round" stroke-linecap="round" filter="url(#b3)"/>
<path d="M292 229 L283 239 L283 262 L270 273 L261 291 L260 307 L252 318 L241 332 L226 342" fill="none" stroke="#a8d440" stroke-width="80" stroke-linejoin="round" stroke-linecap="round" filter="url(#b5)"/>
<path d="M222 342 L230 365 L235 373" fill="none" stroke="#a8d440" stroke-width="46" stroke-linejoin="round" stroke-linecap="round" filter="url(#b3)"/>
<path d="M226 423 L206 427 L180 423" fill="none" stroke="#a8d440" stroke-width="60" stroke-linejoin="round" stroke-linecap="round" filter="url(#b3)"/>
<path d="M590 125 L590 190 L640 215" fill="none" stroke="#a8d440" stroke-width="70" stroke-linejoin="round" stroke-linecap="round" filter="url(#b5)"/>
<path d="M372 526 L394 546 L422 566 L436 580" fill="none" stroke="#a8d440" stroke-width="56" stroke-linejoin="round" stroke-linecap="round" filter="url(#b3)"/>
<path d="M369 125 L370 178 L372 205" fill="none" stroke="#d8c840" stroke-width="100" stroke-linejoin="round" stroke-linecap="butt" filter="url(#b3)"/>
<path d="M372 214 L356 219 L336 224 L302 224 L292 229" fill="none" stroke="#d8c840" stroke-width="84" stroke-linejoin="round" stroke-linecap="round" filter="url(#b3)"/>
<path d="M292 229 L283 239 L283 262 L270 273 L261 291 L260 307 L252 318 L241 332 L226 342" fill="none" stroke="#d8c840" stroke-width="60" stroke-linejoin="round" stroke-linecap="round" filter="url(#b5)"/>
<path d="M222 342 L230 365 L235 373" fill="none" stroke="#d8c840" stroke-width="36" stroke-linejoin="round" stroke-linecap="round" filter="url(#b3)"/>
<path d="M226 423 L206 427 L180 423" fill="none" stroke="#d8c840" stroke-width="52" stroke-linejoin="round" stroke-linecap="round" filter="url(#b3)"/>
<path d="M590 125 L590 190 L640 215" fill="none" stroke="#d8c840" stroke-width="50" stroke-linejoin="round" stroke-linecap="round" filter="url(#b5)"/>
<path d="M372 526 L394 546 L422 566 L436 580" fill="none" stroke="#d8c840" stroke-width="44" stroke-linejoin="round" stroke-linecap="round" filter="url(#b3)"/>
<path d="M369 125 L370 178 L372 205" fill="none" stroke="#e47a30" stroke-width="72" stroke-linejoin="round" stroke-linecap="butt" filter="url(#b3)"/>
<path d="M372 214 L356 219 L336 224 L302 224 L292 229" fill="none" stroke="#e47a30" stroke-width="46" stroke-linejoin="round" stroke-linecap="round" filter="url(#b3)"/>
<path d="M292 229 L283 239 L283 262 L270 273 L261 291 L260 307 L252 318 L241 332 L226 342" fill="none" stroke="#e47a30" stroke-width="38" stroke-linejoin="round" stroke-linecap="round" filter="url(#b5)"/>
<path d="M222 342 L230 365 L235 373" fill="none" stroke="#e47a30" stroke-width="28" stroke-linejoin="round" stroke-linecap="round" filter="url(#b3)"/>
<path d="M226 423 L206 427 L180 423" fill="none" stroke="#e47a30" stroke-width="40" stroke-linejoin="round" stroke-linecap="round" filter="url(#b3)"/>
<path d="M590 125 L590 190 L640 215" fill="none" stroke="#e47a30" stroke-width="30" stroke-linejoin="round" stroke-linecap="round" filter="url(#b5)"/>
<path d="M372 526 L394 546 L422 566 L436 580" fill="none" stroke="#e47a30" stroke-width="34" stroke-linejoin="round" stroke-linecap="round" filter="url(#b3)"/>
<path d="M369 125 L370 178 L372 205" fill="none" stroke="#d03a2e" stroke-width="50" stroke-linejoin="round" stroke-linecap="butt" filter="url(#b3)"/>
<path d="M372 214 L356 219 L336 224 L302 224 L292 229" fill="none" stroke="#d03a2e" stroke-width="32" stroke-linejoin="round" stroke-linecap="round" filter="url(#b3)"/>
<path d="M292 229 L283 239 L283 262 L270 273 L261 291 L260 307 L252 318 L241 332 L226 342" fill="none" stroke="#d03a2e" stroke-width="26" stroke-linejoin="round" stroke-linecap="round" filter="url(#b5)"/>
<path d="M222 342 L230 365 L235 373" fill="none" stroke="#d03a2e" stroke-width="22" stroke-linejoin="round" stroke-linecap="round" filter="url(#b3)"/>
<path d="M237 379 L245 387 L246 398 L242 408 L236 416" fill="none" stroke="#d03a2e" stroke-width="14" stroke-linejoin="round" stroke-linecap="round" filter="url(#b3)"/>
<path d="M226 423 L206 427 L180 423" fill="none" stroke="#d03a2e" stroke-width="28" stroke-linejoin="round" stroke-linecap="round" filter="url(#b3)"/>
<path d="M590 125 L590 190 L640 215" fill="none" stroke="#d03a2e" stroke-width="16" stroke-linejoin="round" stroke-linecap="round" filter="url(#b5)"/>
<path d="M372 526 L394 546 L422 566 L436 580" fill="none" stroke="#d03a2e" stroke-width="24" stroke-linejoin="round" stroke-linecap="round" filter="url(#b3)"/>
<path d="M300 308 L350 301 L407 286 L440 272 L462 262 L462 292 L432 300 L402 318 L372 342 L340 337 L305 332z" fill="#3060d8" filter="url(#b5)" opacity="1"/>
<ellipse cx="360" cy="325" rx="20" ry="12" fill="#2c40c8" filter="url(#b5)" opacity="1" transform="rotate(-10 360 325)"/>
<ellipse cx="432" cy="285" rx="16" ry="10" fill="#2c44c8" filter="url(#b5)" opacity="1" transform="rotate(-20 432 285)"/>
<path d="M374 150 L394 168 L394 182 L374 200z" fill="#b8383c" filter="url(#b2)"/>
<path d="M374 150 L380 158 L393 170 L393 178 L380 193 L373 200" fill="none" stroke="#7a7a72" stroke-width="2"/>
<path d="M540 448 L562 440 L600 425 L600 560 L540 560z" fill="#a8d040" filter="url(#b3)" opacity="1"/>
<path d="M540 456 L565 448 L600 440 L600 560 L540 560z" fill="#d8b840" filter="url(#b3)" opacity="1"/>
<path d="M540 462 L570 458 L600 455 L600 560 L540 560z" fill="#e08030" filter="url(#b3)" opacity="1"/>
<ellipse cx="565" cy="485" rx="10" ry="12" fill="#d8a040" filter="url(#b5)" opacity="1" transform="rotate(0 565 485)"/>
<path d="M540 515 L600 512 L600 560 L540 560z" fill="#d84a30" filter="url(#b3)" opacity="1"/>
<ellipse cx="458" cy="385" rx="13" ry="30" fill="#d0d040" filter="url(#b7)" opacity="1" transform="rotate(0 458 385)"/>
<ellipse cx="440" cy="410" rx="22" ry="10" fill="#e09038" filter="url(#b5)" opacity="1" transform="rotate(0 440 410)"/>
<ellipse cx="272" cy="440" rx="9" ry="14" fill="#d8b840" filter="url(#b5)" opacity="1" transform="rotate(0 272 440)"/>
<defs>
<mask id="cm0" maskUnits="userSpaceOnUse" x="100" y="80" width="600" height="600"><path d="M377 125 L372 155 L369 173 L372 193 L372 214 L356 219 L336 224 L302 224 L292 229 L283 239 L283 262 L270 273 L261 291 L260 307 L252 318 L241 332 L226 342 L230 365 L237 379 L245 387 L246 398 L242 408 L236 416 L222 425 L206 427 L175 423" fill="none" stroke="#fff" stroke-width="19.1" stroke-linejoin="round"/><path d="M377 125 L372 155 L369 173 L372 193 L372 214 L356 219 L336 224 L302 224 L292 229 L283 239 L283 262 L270 273 L261 291 L260 307 L252 318 L241 332 L226 342 L230 365 L237 379 L245 387 L246 398 L242 408 L236 416 L222 425 L206 427 L175 423" fill="none" stroke="#000" stroke-width="16.9" stroke-linejoin="round"/></mask>
<mask id="cm1" maskUnits="userSpaceOnUse" x="100" y="80" width="600" height="600"><path d="M377 125 L372 155 L369 173 L372 193 L372 214 L356 219 L336 224 L302 224 L292 229 L283 239 L283 262 L270 273 L261 291 L260 307 L252 318 L241 332 L226 342 L230 365 L237 379 L245 387 L246 398 L242 408 L236 416 L222 425 L206 427 L175 423" fill="none" stroke="#fff" stroke-width="31.1" stroke-linejoin="round"/><path d="M377 125 L372 155 L369 173 L372 193 L372 214 L356 219 L336 224 L302 224 L292 229 L283 239 L283 262 L270 273 L261 291 L260 307 L252 318 L241 332 L226 342 L230 365 L237 379 L245 387 L246 398 L242 408 L236 416 L222 425 L206 427 L175 423" fill="none" stroke="#000" stroke-width="28.9" stroke-linejoin="round"/></mask>
<mask id="cm2" maskUnits="userSpaceOnUse" x="100" y="80" width="600" height="600"><path d="M377 125 L372 155 L369 173 L372 193 L372 214 L356 219 L336 224 L302 224 L292 229 L283 239 L283 262 L270 273 L261 291 L260 307 L252 318 L241 332 L226 342 L230 365 L237 379 L245 387 L246 398 L242 408 L236 416 L222 425 L206 427 L175 423" fill="none" stroke="#fff" stroke-width="45.1" stroke-linejoin="round"/><path d="M377 125 L372 155 L369 173 L372 193 L372 214 L356 219 L336 224 L302 224 L292 229 L283 239 L283 262 L270 273 L261 291 L260 307 L252 318 L241 332 L226 342 L230 365 L237 379 L245 387 L246 398 L242 408 L236 416 L222 425 L206 427 L175 423" fill="none" stroke="#000" stroke-width="42.9" stroke-linejoin="round"/></mask>
<mask id="cm3" maskUnits="userSpaceOnUse" x="100" y="80" width="600" height="600"><path d="M377 125 L372 155 L369 173 L372 193 L372 214 L356 219 L336 224 L302 224 L292 229 L283 239 L283 262 L270 273 L261 291 L260 307 L252 318 L241 332 L226 342 L230 365 L237 379 L245 387 L246 398 L242 408 L236 416 L222 425 L206 427 L175 423" fill="none" stroke="#fff" stroke-width="61.1" stroke-linejoin="round"/><path d="M377 125 L372 155 L369 173 L372 193 L372 214 L356 219 L336 224 L302 224 L292 229 L283 239 L283 262 L270 273 L261 291 L260 307 L252 318 L241 332 L226 342 L230 365 L237 379 L245 387 L246 398 L242 408 L236 416 L222 425 L206 427 L175 423" fill="none" stroke="#000" stroke-width="58.9" stroke-linejoin="round"/></mask>
<mask id="cm4" maskUnits="userSpaceOnUse" x="100" y="80" width="600" height="600"><path d="M377 125 L372 155 L369 173 L372 193 L372 214 L356 219 L336 224 L302 224 L292 229 L283 239 L283 262 L270 273 L261 291 L260 307 L252 318 L241 332 L226 342 L230 365 L237 379 L245 387 L246 398 L242 408 L236 416 L222 425 L206 427 L175 423" fill="none" stroke="#fff" stroke-width="81.1" stroke-linejoin="round"/><path d="M377 125 L372 155 L369 173 L372 193 L372 214 L356 219 L336 224 L302 224 L292 229 L283 239 L283 262 L270 273 L261 291 L260 307 L252 318 L241 332 L226 342 L230 365 L237 379 L245 387 L246 398 L242 408 L236 416 L222 425 L206 427 L175 423" fill="none" stroke="#000" stroke-width="78.9" stroke-linejoin="round"/></mask>
<mask id="cm5" maskUnits="userSpaceOnUse" x="100" y="80" width="600" height="600"><path d="M377 125 L372 155 L369 173 L372 193 L372 214 L356 219 L336 224 L302 224 L292 229 L283 239 L283 262 L270 273 L261 291 L260 307 L252 318 L241 332 L226 342 L230 365 L237 379 L245 387 L246 398 L242 408 L236 416 L222 425 L206 427 L175 423" fill="none" stroke="#fff" stroke-width="101.1" stroke-linejoin="round"/><path d="M377 125 L372 155 L369 173 L372 193 L372 214 L356 219 L336 224 L302 224 L292 229 L283 239 L283 262 L270 273 L261 291 L260 307 L252 318 L241 332 L226 342 L230 365 L237 379 L245 387 L246 398 L242 408 L236 416 L222 425 L206 427 L175 423" fill="none" stroke="#000" stroke-width="98.9" stroke-linejoin="round"/></mask>
<mask id="cm6" maskUnits="userSpaceOnUse" x="100" y="80" width="600" height="600"><path d="M377 125 L372 155 L369 173 L372 193 L372 214 L356 219 L336 224 L302 224 L292 229 L283 239 L283 262 L270 273 L261 291 L260 307 L252 318 L241 332 L226 342 L230 365 L237 379 L245 387 L246 398 L242 408 L236 416 L222 425 L206 427 L175 423" fill="none" stroke="#fff" stroke-width="125.1" stroke-linejoin="round"/><path d="M377 125 L372 155 L369 173 L372 193 L372 214 L356 219 L336 224 L302 224 L292 229 L283 239 L283 262 L270 273 L261 291 L260 307 L252 318 L241 332 L226 342 L230 365 L237 379 L245 387 L246 398 L242 408 L236 416 L222 425 L206 427 L175 423" fill="none" stroke="#000" stroke-width="122.9" stroke-linejoin="round"/></mask>
</defs>
<rect x="150" y="100" width="480" height="520" fill="#a09890" mask="url(#cm0)" opacity="0.6"/>
<rect x="150" y="100" width="480" height="520" fill="#a09890" mask="url(#cm1)" opacity="0.6"/>
<rect x="150" y="100" width="480" height="520" fill="#a09890" mask="url(#cm2)" opacity="0.6"/>
<rect x="150" y="100" width="480" height="520" fill="#a09890" mask="url(#cm3)" opacity="0.6"/>
<rect x="150" y="100" width="480" height="520" fill="#a09890" mask="url(#cm4)" opacity="0.6"/>
<rect x="150" y="100" width="480" height="520" fill="#a09890" mask="url(#cm5)" opacity="0.6"/>
<rect x="150" y="100" width="480" height="520" fill="#a09890" mask="url(#cm6)" opacity="0.6"/>
<path d="M498 139 L497 165 L485 185 L467 198 L450 198 L440 201 L434 210 L432 227 L423 242 L413 250 L392 266 L382 273 L360 280" fill="none" stroke="#a09890" stroke-width="1" opacity="0.7"/>
<path d="M360 300 L382 294 L408 289 L434 273 L441 279 L439 294 L421 304 L403 320 L382 328 L350 335 L320 340" fill="none" stroke="#a09890" stroke-width="1" opacity="0.7"/>
<path d="M460 273 L470 260 L485 273 L501 286 L527 291 L542 299 L547 315 L537 325 L511 328 L490 320 L470 300z" fill="none" stroke="#a09890" stroke-width="1" opacity="0.7"/>
<path d="M527 139 L550 165 L558 191 L578 211 L585 217" fill="none" stroke="#a09890" stroke-width="1" opacity="0.7"/>
<path d="M410 139 L426 165 L434 185 L421 217 L398 248 L382 260 L350 272" fill="none" stroke="#a09890" stroke-width="1" opacity="0.7"/>
<path d="M382 266 L408 250 L428 242 L449 235 L485 237 L503 241 L516 232 L527 224 L525 165 L534 164 L537 191 L542 216 L563 240 L580 268 L585 290" fill="none" stroke="#a09890" stroke-width="1" opacity="0.7"/>
<path d="M545 139 L552 170 L565 200 L583 215" fill="none" stroke="#a09890" stroke-width="1" opacity="0.7"/>
<path d="M558 139 L562 165 L572 190 L583 200" fill="none" stroke="#a09890" stroke-width="1" opacity="0.7"/>
<path d="M568 139 L570 160 L578 180 L583 185" fill="none" stroke="#a09890" stroke-width="1" opacity="0.7"/>
<path d="M453 355 L465 358 L466 380 L460 400 L470 418" fill="none" stroke="#a09890" stroke-width="1" opacity="0.7"/>
<path d="M445 350 L470 345 L478 380 L472 405 L480 418" fill="none" stroke="#a09890" stroke-width="1" opacity="0.7"/>
<path d="M430 345 L455 338 L485 345 L500 375 L495 418" fill="none" stroke="#a09890" stroke-width="1" opacity="0.7"/>
<path d="M420 330 L470 322 L505 330 L520 360 L530 380 L545 400 L560 418" fill="none" stroke="#a09890" stroke-width="1" opacity="0.7"/>
<path d="M525 320 L545 330 L560 355 L575 380 L583 400" fill="none" stroke="#a09890" stroke-width="1" opacity="0.7"/>
<path d="M470 139 L480 160 L470 185 L440 190 L420 200 L405 230" fill="none" stroke="#a09890" stroke-width="1" opacity="0.7"/>
<path d="M300 350 L320 342 L330 360 L318 385 L300 400 L290 420 L300 440" fill="none" stroke="#a09890" stroke-width="1" opacity="0.7"/>
<path d="M262 345 L285 330 L310 338 L300 370 L280 405 L272 430" fill="none" stroke="#a09890" stroke-width="1" opacity="0.7"/>
<path d="M200 450 L230 445 L250 430 L270 420 L290 418" fill="none" stroke="#a09890" stroke-width="1" opacity="0.7"/>
<path d="M285 550 L300 540 L320 545 L330 560 L315 567" fill="none" stroke="#a09890" stroke-width="1" opacity="0.7"/>
<path d="M330 540 L345 560 L350 567" fill="none" stroke="#a09890" stroke-width="1" opacity="0.7"/>
<path d="M345 537 L360 555 L365 567" fill="none" stroke="#a09890" stroke-width="1" opacity="0.7"/>
<path d="M560 440 L570 470 L575 500 L583 520" fill="none" stroke="#a09890" stroke-width="1" opacity="0.7"/>
<path d="M545 440 L555 480 L560 520 L583 540" fill="none" stroke="#a09890" stroke-width="1" opacity="0.7"/>
<path d="M540 485 L560 490 L565 510 L550 515z" fill="none" stroke="#a09890" stroke-width="1" opacity="0.7"/>
<path d="M520 139 L525 150 L540 160" fill="none" stroke="#a09890" stroke-width="1" opacity="0.7"/>
<path d="M191 527 L209 514 L226 516 L241 514 L245 522 L232 531 L230 542 L191 559" fill="none" stroke="#a09890" stroke-width="1" opacity="0.7"/>
<path d="M241 458 L260 466 L267 479 L267 492 L279 501" fill="none" stroke="#a09890" stroke-width="1" opacity="0.7"/>
<path d="M241 460 L245 477 L250 490 L265 499 L279 505" fill="none" stroke="#a09890" stroke-width="1" opacity="0.7"/>
<path d="M191 497 L213 507 L221 499 L224 475 L241 458" fill="none" stroke="#a09890" stroke-width="1" opacity="0.7"/>
<path d="M191 467 L213 464 L232 452 L241 447" fill="none" stroke="#a09890" stroke-width="1" opacity="0.7"/>
<path d="M191 486 L215 486 L226 471 L234 452 L241 441" fill="none" stroke="#a09890" stroke-width="1" opacity="0.7"/>
<path d="M262 567 L262 559 L269 550 L285 542" fill="none" stroke="#a09890" stroke-width="1" opacity="0.7"/>
<path d="M549 443 L565 455 L582 470" fill="none" stroke="#a09890" stroke-width="1" opacity="0.7"/>
<path d="M549 452 L560 470 L582 495" fill="none" stroke="#a09890" stroke-width="1" opacity="0.7"/>
<path d="M549 517 L570 525 L582 535" fill="none" stroke="#a09890" stroke-width="1" opacity="0.7"/>
<path d="M560 496 Q565 488 574 490 Q580 497 574 503 Q565 505 560 496z" fill="none" stroke="#a09890" stroke-width="1" opacity="0.7"/>
<ellipse cx="420" cy="395" rx="22" ry="22" fill="#a8d040" filter="url(#b5)" opacity="1" transform="rotate(0 420 395)"/>
<path d="M325 418 Q335 385 365 378 Q395 376 410 400 L412 418z" fill="#e09030" filter="url(#b3)"/>
<path d="M334 418 L340 400 L350 390 L365 386 L380 385 L395 390 L405 418z" fill="#d84030" filter="url(#b1)"/>
<path d="M338 418 L346 406 L370 400 L395 405 L400 418z" fill="#f08080"/>
<ellipse cx="353" cy="400" rx="13" ry="6.5" fill="#f08080" stroke="#40c8c8" stroke-width="2.5"/>
<path d="M356 389 L373 385" stroke="#40c8c8" stroke-width="2.5"/>
<path d="M343 401h16M346 396l10 10M356 396l-10 10" stroke="#7a1a1a" stroke-width="0.8"/>
<path d="M350 418 L356 411 L372 409 L388 410 L396 418z" fill="#f4f4f4"/>
<path d="M352 416 Q360 410 366 414 Q372 409 380 413" fill="none" stroke="#e040d0" stroke-width="1.5"/>
<path d="M384 409 Q392 408 396 418" fill="none" stroke="#111" stroke-width="1" stroke-dasharray="1.2 1.2"/>
<path d="M402 398 L408 418 M408 397 L414 418" stroke="#f0a8e0" stroke-width="1"/>
<path d="M364 130 L365 178 L368 191 L371 198 L372 214 L363 222 L339 219 L326 222 L313 217 L303 220 L283 239 L283 262 L270 273 L261 291 L260 307 L252 318 L241 332 L226 342 L230 365 L237 379 L245 387 L246 398 L242 408 L236 416 L222 425 L206 427 L191 419 L180 419 L180 130z" fill="#fafafa" stroke="#fafafa" stroke-width="13" stroke-linejoin="round"/>
<path d="M364 130 L365 178 L368 191 L371 198 L372 214 L363 222 L339 219 L326 222 L313 217 L303 220 L283 239 L283 262 L270 273 L261 291 L260 307 L252 318 L241 332 L226 342 L230 365 L237 379 L245 387 L246 398 L242 408 L236 416 L222 425 L206 427 L191 419 L180 419 L180 130z" fill="#e6eef7"/>
<path d="M364 130 L365 178 L368 191 L371 198 L372 214 L363 222 L339 219 L326 222 L313 217 L303 220 L283 239 L283 262 L270 273 L261 291 L260 307 L252 318 L241 332 L226 342 L230 365 L237 379 L245 387 L246 398 L242 408 L236 416 L222 425 L206 427 L191 419" fill="none" stroke="#858585" stroke-width="1.8"/>
<path d="M338 139 L331 144 L338 152 L347 152 L355 162 L357 172 L364 181 L364 191 L356 199 L361 212 L355 217 L339 212 L331 207 L317 207 L308 203 L297 200 L289 209 L279 222 L276 227 L271 235 L261 240 L250 248 L249 253 L245 266 L232 276 L230 289 L222 294 L222 310 L219 320 L214 328 L214 335 L210 343 L204 348 L205 354 L211 359 L219 360 L222 367 L228 371 L236 385 L239 394 L234 398 L227 401 L217 407 L200 409 L191 408 L180 408 L180 130 L338 130z" fill="#f8f2e0"/>
<path d="M338 139 L331 144 L338 152 L347 152 L355 162 L357 172 L364 181 L364 191 L356 199 L361 212 L355 217 L339 212 L331 207 L317 207 L308 203 L297 200 L289 209 L279 222 L276 227 L271 235 L261 240 L250 248 L249 253 L245 266 L232 276 L230 289 L222 294 L222 310 L219 320 L214 328 L214 335 L210 343 L204 348 L205 354 L211 359 L219 360 L222 367 L228 371 L236 385 L239 394 L234 398 L227 401 L217 407 L200 409 L191 408" fill="none" stroke="#d848c8" stroke-width="1.3"/>
<path d="M376 530 L396 546 L424 566 L436 580 L600 580 L600 530z" fill="#fafafa" stroke="#fafafa" stroke-width="8"/>
<path d="M380 532 L398 546 L426 566 L436 580 L600 580 L600 530z" fill="#e6eef7"/>
<path d="M380 532 L398 546 L426 566 L436 580" fill="none" stroke="#858585" stroke-width="1.5"/>
<path d="M389 532 L402 545 L430 566 L440 580 L600 580 L600 560 L570 556 L545 545 L530 540 L505 538 L480 535 L470 530z" fill="#f8f2e0"/>
<path d="M389 532 L402 545 L430 566 L440 580" fill="none" stroke="#d848c8" stroke-width="1.3"/>
<path d="M470 536 L480 535 L505 538 L530 540 L545 545 L570 556 L600 560" fill="none" stroke="#d848c8" stroke-width="1.3"/>
<path d="M520 532 L540 538 L560 548 L583 552" fill="none" stroke="#858585" stroke-width="1.2"/>
<circle cx="552" cy="552" r="2.8" fill="#e8eef0" stroke="#9a9a9a" stroke-width="0.8"/>
<circle cx="561" cy="556" r="2.8" fill="#e8eef0" stroke="#9a9a9a" stroke-width="0.8"/>
<circle cx="570" cy="560" r="2.8" fill="#e8eef0" stroke="#9a9a9a" stroke-width="0.8"/>
<path d="M191 154 L203 139" stroke="#6e6e6e" stroke-width="3.5"/>
<path d="M204 139 L250 139 L247 145 L232 148 L212 150 L206 146z" fill="#e4ece8" stroke="#8a8a8a" stroke-width="1"/>
<path d="M212 150 L232 148 L247 145" fill="none" stroke="#d848c8" stroke-width="1"/>
<path d="M191 232 L199 227 L208 215 L223 205 L236 198.5 L253 191 L266 182 L281 170 L287 176" fill="none" stroke="#111" stroke-width="0.9"/>
<path d="M307 160 L325 149 L332 147" fill="none" stroke="#111" stroke-width="0.9"/>
<path d="M191 257 L206 273 L222 289 L225 294" fill="none" stroke="#111" stroke-width="0.9"/>
<path d="M212 178 L232 225.5 L192.5 225.5z" fill="none" stroke="#f4b4e4" stroke-width="1"/><rect x="209.5" y="193" width="4.5" height="22" rx="2" fill="#f4b4e4"/><rect x="209.5" y="219" width="4.5" height="1.5" fill="#f4b4e4"/>
<path d="M225 170 V152 M229 170 V152" stroke="#111" stroke-width="1.4"/><path d="M224 153 L224 149 L237 147 L237 151 z" fill="#fff" stroke="#111" stroke-width="1.4"/><path d="M221 170.5 H234" stroke="#111" stroke-width="1.3"/><circle cx="227" cy="170.5" r="1.6" fill="#fff" stroke="#111" stroke-width="1"/>
<path d="M253 170 V149 M257 170 V149" stroke="#111" stroke-width="1.4"/><path d="M252 150 L252 146 L265 144 L265 148 z" fill="#fff" stroke="#111" stroke-width="1.4"/><path d="M249 170.5 H262" stroke="#111" stroke-width="1.3"/><circle cx="255" cy="170.5" r="1.6" fill="#fff" stroke="#111" stroke-width="1"/>
<path d="M281 139 V153 M285 139 V153" stroke="#111" stroke-width="1.4"/><path d="M275.5 154 H290" stroke="#111" stroke-width="1.3"/><circle cx="283" cy="154" r="1.6" fill="#fff" stroke="#111" stroke-width="1"/>
<path d="M299.0 202.5 L311.0 212.5 M311.0 202.5 L299.0 212.5 M298.0 207.5 H312.0" stroke="#111" stroke-width="0.9"/>
<path d="M319.0 206.0 L331.0 216.0 M331.0 206.0 L319.0 216.0 M318.0 211 H332.0" stroke="#111" stroke-width="0.9"/>
<path d="M287.0 209.0 L299.0 219.0 M299.0 209.0 L287.0 219.0 M286.0 214 H300.0" stroke="#111" stroke-width="0.9"/>
<path d="M265.0 233.5 L277.0 243.5 M277.0 233.5 L265.0 243.5 M264.0 238.5 H278.0" stroke="#111" stroke-width="0.9"/>
<path d="M250.0 242.5 L262.0 252.5 M262.0 242.5 L250.0 252.5 M249.0 247.5 H263.0" stroke="#111" stroke-width="0.9"/>
<path d="M252.0 254.0 L264.0 264.0 M264.0 254.0 L252.0 264.0 M251.0 259 H265.0" stroke="#111" stroke-width="0.9"/>
<path d="M253.5 264.5 L265.5 274.5 M265.5 264.5 L253.5 274.5 M252.5 269.5 H266.5" stroke="#111" stroke-width="0.9"/>
<path d="M238.0 275.0 L250.0 285.0 M250.0 275.0 L238.0 285.0 M237.0 280 H251.0" stroke="#111" stroke-width="0.9"/>
<path d="M239.0 286.5 L251.0 296.5 M251.0 286.5 L239.0 296.5 M238.0 291.5 H252.0" stroke="#111" stroke-width="0.9"/>
<path d="M228.0 303.0 L240.0 313.0 M240.0 303.0 L228.0 313.0 M227.0 308 H241.0" stroke="#111" stroke-width="0.9"/>
<path d="M240.5 302.0 L252.5 312.0 M252.5 302.0 L240.5 312.0 M239.5 307 H253.5" stroke="#111" stroke-width="0.9"/>
<path d="M221.0 317.5 L233.0 327.5 M233.0 317.5 L221.0 327.5 M220.0 322.5 H234.0" stroke="#111" stroke-width="0.9"/>
<path d="M209.0 350.0 L221.0 360.0 M221.0 350.0 L209.0 360.0 M208.0 355 H222.0" stroke="#111" stroke-width="0.9"/>
<path d="M358.0 196.0 L370.0 206.0 M370.0 196.0 L358.0 206.0 M357.0 201 H371.0" stroke="#111" stroke-width="0.9"/>
<circle cx="249" cy="273" r="2.8" fill="#dcdcd0" stroke="#9a9a9a" stroke-width="0.8"/>
<circle cx="234" cy="297" r="2.8" fill="#dcdcd0" stroke="#9a9a9a" stroke-width="0.8"/>
<circle cx="223" cy="320" r="2.8" fill="#dcdcd0" stroke="#9a9a9a" stroke-width="0.8"/>
<circle cx="240" cy="302" r="2.8" fill="#dcdcd0" stroke="#9a9a9a" stroke-width="0.8"/>
<circle cx="351" cy="145" r="7" fill="#b4d4ec" stroke="#7aa0c0" stroke-width="0.8" stroke-dasharray="1.5 1"/><path d="M351 139v12M345 145h12" stroke="#111" stroke-width="0.9"/>
<rect x="349" y="153" width="6" height="18" fill="#f0e040" stroke="#111" stroke-width="1"/><circle cx="352" cy="162" r="0.9" fill="#111"/>
<path d="M351 170 L360 176" stroke="#d848c8" stroke-width="1"/>
<rect x="355" y="197" width="17" height="16" fill="none" stroke="#d848c8" stroke-width="1"/>
<path d="M360 192 V213 M364 192 V213 M357 213 H369" stroke="#111" stroke-width="1"/>
<path d="M364 213 L382 228 Q386 233 380 234 Q376 234 372 228z" fill="#d8c850" stroke="#111" stroke-width="0.9"/>
<text x="383" y="174" font-family="Liberation Sans" font-size="9" fill="#111">6</text><text x="388" y="177" font-family="Liberation Sans" font-size="6" fill="#111">6</text>
<rect x="233" y="373.5" width="4.5" height="4" fill="none" stroke="#111" stroke-width="0.9"/><path d="M233 377.5 L231.5 395 M237.5 377.5 L239 395 M229.5 395 H241" stroke="#111" stroke-width="0.9"/><circle cx="235" cy="395" r="1.5" fill="#fff" stroke="#111" stroke-width="0.8"/>
<path d="M236 396 L253 408 Q258 413 252 414.5 Q248 415 245 411z" fill="#d8c850" stroke="#111" stroke-width="0.9"/>
<text x="199" y="418" font-family="Liberation Sans" font-size="9" font-style="italic" fill="#111">Z</text><text x="205" y="419" font-family="Liberation Sans" font-size="6" fill="#111">8</text>
<path d="M229 405 q3 -3 4 2 q-1 5 -4 4z" fill="none" stroke="#d848c8" stroke-width="1"/>
<text x="392" y="300" font-family="Liberation Sans" font-size="9" fill="#a09890" opacity="0.9">131</text>
<text x="496" y="302" font-family="Liberation Sans" font-size="9" fill="#a09890" opacity="0.9">92</text>
<text x="547" y="298" font-family="Liberation Sans" font-size="9" fill="#a09890" opacity="0.9">106</text>
<text x="508" y="152" font-family="Liberation Sans" font-size="9" fill="#a09890" opacity="0.9">96</text>
<text x="257" y="413" font-family="Liberation Sans" font-size="9" fill="#a09890" opacity="0.9">106</text>
<text x="246" y="548" font-family="Liberation Sans" font-size="9" fill="#a09890" opacity="0.9">153</text>
<text x="305" y="561" font-family="Liberation Sans" font-size="9" fill="#a09890" opacity="0.9">186</text>
<text x="452" y="375" font-family="Liberation Sans" font-size="9" fill="#a09890" opacity="0.9">54</text>
<text x="565" y="499" font-family="Liberation Sans" font-size="9" fill="#a09890" opacity="0.9">26</text>
</g></svg>
<!-- Coordinates floating window -->
<div class="a" style="left:278px;top:418px;width:270px;height:119px;background:linear-gradient(180deg,#98b2d0 0px,#b4cbe6 26px,#bcd2ec 100%);border:1px solid #3a3a3a"></div>
<div class="t b" style="left:284px;top:427px;color:#fff;font-size:11.4px;text-shadow:0 0 2px #8aa0c0">Coordinates</div>
<div class="xbtn" style="left:531px;top:424px"></div>
<div class="a" style="left:282px;top:445px;width:262px;height:88px;background:#fff;border:1px solid #8a8a8a;border-right-color:#d8d8d8;border-bottom-color:#d8d8d8"></div>
<div class="a" style="left:303px;top:446px;width:1px;height:86px;background:#e4e4e4"></div>
<div class="a" style="left:383px;top:446px;width:1px;height:86px;background:#e4e4e4"></div>
<div class="a" style="left:463px;top:446px;width:1px;height:86px;background:#e4e4e4"></div>
<div class="a" style="left:523px;top:446px;width:1px;height:86px;background:#e4e4e4"></div>
<div class="a" style="left:283px;top:489px;width:260px;height:1px;background:#e8e8e8"></div>
<div class="a" style="left:283px;top:508px;width:260px;height:1px;background:#e8e8e8"></div>
<div class="a" style="left:283px;top:527px;width:260px;height:1px;background:#e8e8e8"></div>
<div class="t" style="left:349px;top:452px">X (m)</div>
<div class="t" style="left:429px;top:452px">Y (m)</div>
<div class="t" style="left:489px;top:452px">Z (m)</div>
<!-- cursor -->
<svg class="a" style="left:458px;top:422px" width="16" height="22"><path d="M1.5 1.5v15.5l3.8-3.6 2.7 6.3 2.6-1.1-2.6-6.1h5.3z" fill="#fff" stroke="#000" stroke-width="1"/></svg>

<svg class="a" style="left:0;top:0" width="870" height="774">
<defs>
<linearGradient id="ig" x1="0" y1="0" x2="0" y2="1"><stop offset="0" stop-color="#c4d4ea"/><stop offset="1" stop-color="#eef3fa"/></linearGradient>
<linearGradient id="igd" x1="0" y1="0" x2="0" y2="1"><stop offset="0" stop-color="#eef3fa"/><stop offset="1" stop-color="#b8cce6"/></linearGradient>
<linearGradient id="igl" x1="0" y1="0" x2="1" y2="0"><stop offset="0" stop-color="#b8cce6"/><stop offset="1" stop-color="#eef3fa"/></linearGradient>
<linearGradient id="igr" x1="0" y1="0" x2="1" y2="0"><stop offset="0" stop-color="#eef3fa"/><stop offset="1" stop-color="#b8cce6"/></linearGradient>
<symbol id="dgT" viewBox="0 0 21 24"><rect x="0.75" y="0.75" width="19.5" height="22.5" fill="#fff" stroke="#40348e" stroke-width="1.5"/><rect x="1.5" y="1.5" width="18" height="10" fill="url(#ig)"/><rect x="1.5" y="1.5" width="18" height="2.2" fill="#6a9ae6"/><path d="M3 11.5h15" stroke="#40348e" stroke-width="1" stroke-dasharray="1 1"/><path d="M6.5 18.5l4-4 4 4z" fill="#40349e"/></symbol>
<symbol id="dgB" viewBox="0 0 21 24"><rect x="0.75" y="0.75" width="19.5" height="22.5" fill="#fff" stroke="#40348e" stroke-width="1.5"/><rect x="1.5" y="13" width="18" height="9.5" fill="url(#igd)"/><rect x="1.5" y="1.5" width="18" height="2.2" fill="#6a9ae6"/><path d="M3 13.5h15" stroke="#40348e" stroke-width="1" stroke-dasharray="1 1"/><path d="M6.5 6.5l4 4 4-4z" fill="#40349e"/></symbol>
<symbol id="dgL" viewBox="0 0 24 21"><rect x="0.75" y="0.75" width="22.5" height="19.5" fill="#fff" stroke="#40348e" stroke-width="1.5"/><rect x="1.5" y="3.5" width="10" height="16" fill="url(#igl)"/><rect x="1.5" y="1.5" width="21" height="2.2" fill="#6a9ae6"/><path d="M11.5 5v14" stroke="#40348e" stroke-width="1" stroke-dasharray="1 1"/><path d="M19 8l-4 3.5 4 3.5z" fill="#40349e"/></symbol>
<symbol id="dgR" viewBox="0 0 24 21"><rect x="0.75" y="0.75" width="22.5" height="19.5" fill="#fff" stroke="#40348e" stroke-width="1.5"/><rect x="12.5" y="3.5" width="10" height="16" fill="url(#igr)"/><rect x="1.5" y="1.5" width="21" height="2.2" fill="#6a9ae6"/><path d="M12.5 5v14" stroke="#40348e" stroke-width="1" stroke-dasharray="1 1"/><path d="M5 8l4 3.5-4 3.5z" fill="#40349e"/></symbol>
</defs>
<!-- center cross guide -->
<path d="M372 310h29v24l5 5h25v29h-25l-5 5v25h-29v-25l-5-5h-24v-29h24l5-5z" fill="#dadada" stroke="#c8c8c8" stroke-width="1"/>
<path d="M374 312h25v23l4 4h26v26h-26l-4 4v26h-25v-26l-4-4h-25v-26h25l4-4z" fill="#e2e2e2"/>
<svg x="376" y="314" width="21" height="24"><use href="#dgT"/></svg>
<svg x="376" y="370" width="21" height="24"><use href="#dgB"/></svg>
<svg x="347" y="343" width="24" height="21"><use href="#dgL"/></svg>
<svg x="403" y="343" width="24" height="21"><use href="#dgR"/></svg>
<circle cx="387.6" cy="352.6" r="51" fill="none" stroke="#ff0000" stroke-width="2.6"/>

<!-- top guide -->
<rect x="420" y="141" width="28.5" height="30.5" fill="#d8d8d8"/><rect x="421" y="142" width="26" height="28" fill="#e0e0e0"/>
<svg x="424" y="145" width="21" height="24"><use href="#dgT"/></svg>
<circle cx="435.5" cy="157.5" r="20.2" fill="none" stroke="#ff0000" stroke-width="2.8"/>

<!-- bottom guide -->
<rect x="420" y="718" width="29" height="30.5" fill="#d8d8d8"/><rect x="421" y="719" width="27" height="28" fill="#e0e0e0"/>
<svg x="424" y="721" width="21" height="24"><use href="#dgB"/></svg>
<circle cx="434.5" cy="733" r="19.5" fill="none" stroke="#ff0000" stroke-width="2.8"/>

<!-- left guide -->
<rect x="6" y="430" width="31" height="28.5" fill="#d8d8d8"/><rect x="7" y="431" width="29" height="26.5" fill="#e0e0e0"/>
<svg x="10" y="434" width="24" height="21"><use href="#dgL"/></svg>
<ellipse cx="22.7" cy="445" rx="19.4" ry="17.2" fill="none" stroke="#ff0000" stroke-width="2.8"/>

<!-- right guide -->
<rect x="833" y="429.7" width="29.5" height="28.6" fill="#d8d8d8"/><rect x="834" y="430.7" width="27.5" height="26.6" fill="#e0e0e0"/>
<svg x="836" y="434" width="24" height="21"><use href="#dgR"/></svg>
<ellipse cx="848" cy="444.5" rx="19.8" ry="18.4" fill="none" stroke="#ff0000" stroke-width="2.8"/>
</svg>

</body></html>
